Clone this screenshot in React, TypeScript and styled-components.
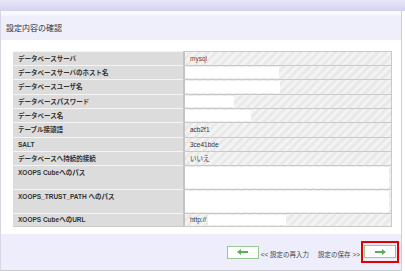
import React from "react";
import styled, { createGlobalStyle } from "styled-components";

const Global = createGlobalStyle`
  html, body { margin: 0; padding: 0; background: #fff; }
  body {
    font-family: "Liberation Sans", "Noto Sans CJK JP", sans-serif;
    width: 405px;
    height: 271px;
    overflow: hidden;
  }
`;

const Page = styled.div`
  width: 405px;
  height: 271px;
  display: flex;
  flex-direction: column;
`;

const TopBand = styled.div`
  height: 11px;
  flex: none;
  background: linear-gradient(#e7e7f8, #d2d2f1);
`;

const Frame = styled.div`
  width: 402px;
  box-sizing: border-box;
  border-left: 1px solid #d6d6e4;
  border-right: 1px solid #cdcdd2;
  flex: 1;
  display: flex;
  flex-direction: column;
`;

const Header = styled.div`
  height: 29px;
  flex: none;
  box-sizing: border-box;
  padding: 7px 0 0 5px;
  display: flex;
  align-items: center;
  background: linear-gradient(#f8f8fd 0, #f8f8fd 4px, #efeffb 5px, #efeffb 100%);
`;

const Title = styled.h1`
  margin: 0;
  font-size: 8px;
  font-weight: normal;
  color: #333;
  line-height: 10px;
`;

const Content = styled.div`
  flex: none;
  padding: 11px 9px 7px 12px;
  background: #fff;
`;

const Table = styled.div`
  display: flex;
  flex-direction: column;
`;

const Row = styled.div<{ $h: number; $last?: boolean }>`
  display: grid;
  grid-template-columns: 170px 1fr;
  height: ${(p) => p.$h}px;
  box-sizing: border-box;
  ${(p) => (p.$last ? "border-bottom: 1px solid #c9c9c9;" : "")}
`;

const Label = styled.div<{ $tall?: boolean }>`
  background: #dcdcdc;
  border-top: 1px solid #f4f4f4;
  padding: ${(p) => (p.$tall ? "3px 0 0 5px" : "0 0 0 5px")};
  display: flex;
  align-items: ${(p) => (p.$tall ? "flex-start" : "center")};
  font-size: 6.5px;
  font-weight: bold;
  color: #333;
  line-height: 8px;
  white-space: nowrap;
`;

const Value = styled.div<{ $accent?: boolean }>`
  border-top: 1px solid #c9c9c9;
  border-left: 2px solid #c4c4c4;
  border-right: 1px solid #c9c9c9;
  background: repeating-linear-gradient(
    135deg,
    #f3f3f3 0,
    #f3f3f3 3px,
    #e9e9e9 3px,
    #e9e9e9 6px
  );
  display: flex;
  align-items: center;
  padding: 1px 0;
  box-sizing: border-box;
  font-size: 6.5px;
  color: ${(p) => (p.$accent ? "#7a3a2c" : "#333")};
  line-height: 8px;
  white-space: nowrap;
`;

const ValueText = styled.span`
  padding-left: 5px;
`;

const Blank = styled.div<{ $w?: number; $gap?: number }>`
  align-self: stretch;
  background: #fff;
  width: ${(p) => (p.$w ? `${p.$w}px` : "auto")};
  flex: ${(p) => (p.$w ? "none" : "1")};
  margin-left: ${(p) => p.$gap ?? 0}px;
  margin-right: ${(p) => (p.$w ? 0 : 2)}px;
`;

const Footer = styled.div`
  flex: 1;
  background: #ededfb;
  border-bottom: 1px solid #c9c9ce;
  display: flex;
  justify-content: flex-end;
  align-items: center;
  padding-right: 2px;
`;

const ArrowButton = styled.div`
  width: 32px;
  height: 13px;
  box-sizing: border-box;
  background: #fff;
  border: 1px solid #94c994;
  display: flex;
  align-items: center;
  justify-content: center;
`;

const NavText = styled.span<{ $ml: number }>`
  margin-left: ${(p) => p.$ml}px;
  margin-top: 6px;
  font-size: 6.5px;
  line-height: 8px;
  color: #444;
  white-space: nowrap;
`;

const Highlight = styled.div`
  margin-left: 1px;
  border: 2px solid #e30000;
  padding: 2px 1px 3px;
`;

const Arrow = ({ dir }: { dir: "left" | "right" }) => (
  <svg width="11" height="6" viewBox="0 0 11 6">
    <path
      d="M0 3 L4 0 L4 2 L11 2 L11 4 L4 4 L4 6 Z"
      fill="#5aae5a"
      transform={dir === "right" ? "translate(11 0) scale(-1 1)" : undefined}
    />
  </svg>
);

type Item = {
  label: string;
  h: number;
  tall?: boolean;
  text?: string;
  accent?: boolean;
  blank?: number | "full";
  blankGap?: number;
};

const items: Item[] = [
  { label: "データベースサーバ", h: 14, text: "mysql", accent: true },
  { label: "データベースサーバのホスト名", h: 14, blank: 94 },
  { label: "データベースユーザ名", h: 15, blank: 95 },
  { label: "データベースパスワード", h: 14, blank: 49 },
  { label: "データベース名", h: 14, blank: 66 },
  { label: "テーブル接頭語", h: 15, text: "acb2f1" },
  { label: "SALT", h: 14, text: "3ce41bde" },
  { label: "データベースへ持続的接続", h: 14, text: "いいえ" },
  { label: "XOOPS Cubeへのパス", h: 24, tall: true, blank: "full" },
  { label: "XOOPS_TRUST_PATH へのパス", h: 24, tall: true, blank: "full" },
  { label: "XOOPS CubeへのURL", h: 14, text: "http://", blank: 78, blankGap: 2 },
];

export default function App() {
  return (
    <>
      <Global />
      <Page>
        <TopBand />
        <Frame>
          <Header>
            <Title>設定内容の確認</Title>
          </Header>
          <Content>
            <Table>
              {items.map((it, i) => (
                <Row key={it.label} $h={it.h} $last={i === items.length - 1}>
                  <Label $tall={it.tall}>{it.label}</Label>
                  <Value $accent={it.accent}>
                    {it.text && <ValueText>{it.text}</ValueText>}
                    {it.blank === "full" && <Blank />}
                    {typeof it.blank === "number" && (
                      <Blank $w={it.blank} $gap={it.blankGap} />
                    )}
                  </Value>
                </Row>
              ))}
            </Table>
          </Content>
          <Footer>
            <ArrowButton>
              <Arrow dir="left" />
            </ArrowButton>
            <NavText $ml={2}>&lt;&lt; 設定の再入力</NavText>
            <NavText $ml={9}>設定の保存 &gt;&gt;</NavText>
            <Highlight>
              <ArrowButton>
                <Arrow dir="right" />
              </ArrowButton>
            </Highlight>
          </Footer>
        </Frame>
      </Page>
    </>
  );
}
